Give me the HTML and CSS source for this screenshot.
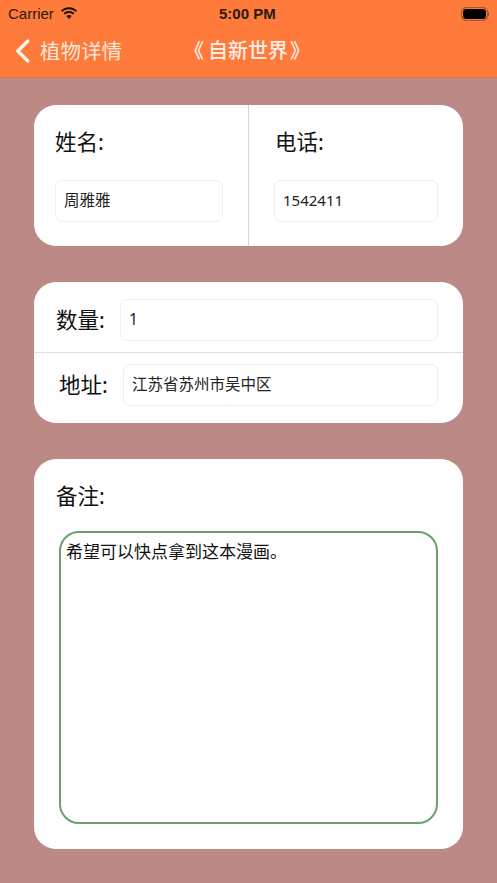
FILE: index.html
```html
<!DOCTYPE html>
<html lang="zh">
<head>
<meta charset="utf-8">
<title>《自新世界》</title>
<link rel="stylesheet" href="styles.css">
</head>
<body>
<div class="phone">
  <header class="top">
    <div class="status">
      <div class="status-left">
        <span class="carrier">Carrier</span>
        <svg class="wifi" width="18" height="13" viewBox="0 0 18 13"><path d="M9 2.200c2.600 0 5 1 6.800 2.700l1.200-1.300C14.900 1.500 12.100.3 9 .3S3.100 1.500 1 3.600l1.200 1.300C4 3.200 6.400 2.200 9 2.200z" fill="#1a1208"/><path d="M9 6c1.600 0 3 .6 4.100 1.600l1.300-1.300C13 4.900 11.100 4.100 9 4.100S5 4.900 3.600 6.300l1.300 1.300C6 6.600 7.400 6 9 6z" fill="#1a1208"/><path d="M9 8c-1 0-1.900.4-2.600 1L9 12l2.600-3C10.900 8.400 10 8 9 8z" fill="#1a1208"/></svg>
      </div>
      <span class="time">5:00 PM</span>
      <div class="battery"><span class="battery-fill"></span><span class="battery-cap"></span></div>
    </div>
    <nav class="nav">
      <div class="back">
        <svg class="chev" width="15" height="24" viewBox="0 0 15 24"><path d="M12.800 2L2.800 12l10 10" fill="none" stroke="#fff" stroke-width="3.200" stroke-linecap="round" stroke-linejoin="round" opacity=".92"/></svg>
        <span class="back-text">植物详情</span>
      </div>
      <h1 class="title"><span class="open">《</span>自新世界<span class="close">》</span></h1>
    </nav>
  </header>
  <main class="content">
    <section class="card card-split">
      <div class="col col-left">
        <div class="label">姓名:</div>
        <div class="field field-name">周雅雅</div>
      </div>
      <div class="col col-right">
        <div class="label">电话:</div>
        <div class="field field-phone">1542411</div>
      </div>
    </section>
    <section class="card card-rows">
      <div class="row row-qty">
        <div class="label">数量:</div>
        <div class="field field-grow">1</div>
      </div>
      <div class="row row-addr">
        <div class="label">地址:</div>
        <div class="field field-grow">江苏省苏州市吴中区</div>
      </div>
    </section>
    <section class="card card-note">
      <div class="label">备注:</div>
      <div class="note">希望可以快点拿到这本漫画。</div>
    </section>
  </main>
</div>
</body>
</html>
```
FILE: styles.css
```css
* { box-sizing: border-box; }
html, body { margin: 0; padding: 0; }
body { font-family: "Noto Sans", "Noto Sans CJK SC", sans-serif; color: #111; }
.phone { width: 497px; height: 883px; background: #bd8987; overflow: hidden; display: flex; flex-direction: column; }
.top { height: 78px; background: #ff7b3b; border-bottom: 1px solid #d97a55; flex: none; }
.status { height: 27px; display: flex; align-items: center; justify-content: space-between; padding: 0 8px; position: relative; }
.status-left { display: flex; align-items: center; gap: 6px; }
.carrier { font-family: "Liberation Sans", sans-serif; font-size: 15px; color: #2a1a10; }
.wifi { display: block; margin-top: -1px; }
.time { font-family: "Liberation Sans", sans-serif; font-size: 15px; font-weight: 700; color: #2a1a10; position: absolute; left: 219px; top: 5px; }
.battery { display: flex; align-items: center; }
.battery-fill { width: 25px; height: 12px; border-radius: 4px; background: #000; box-shadow: 0 0 0 1px #a0562f; border: 1px solid #ff7b3b; }
.battery-cap { width: 1.500px; height: 4px; background: #a0562f; margin-left: 1px; }
.nav { height: 50px; display: flex; align-items: center; position: relative; padding-left: 15px; padding-bottom: 2px; }
.back { display: flex; align-items: center; gap: 10px; }
.chev { display: block; }
.back-text { font-size: 20.500px; color: #fbe6da; line-height: 24px; }
.title { position: absolute; left: 184px; top: 11px; margin: 0; font-size: 20px; font-weight: 500; color: #fdf0e8; line-height: 26px; white-space: nowrap; }
.open { margin-right: 4px; }
.close { margin-left: 2px; }
.content { display: flex; flex-direction: column; padding: 27px 34px 0; gap: 36px; }
.card { background: #fff; border-radius: 22px; width: 429px; }
.card-split { height: 141px; display: flex; }
.col { padding-top: 22px; }
.col-left { width: 215px; border-right: 1px solid #d4d4d4; padding-left: 21px; }
.col-right { flex: 1; padding-left: 25px; }
.label { font-size: 21.500px; line-height: 30px; color: #111; white-space: nowrap; }
.col-right .label { padding-left: 1px; }
.field { height: 42px; border: 1px solid #eeeeee; border-radius: 7px; background: #fff; font-size: 15.500px; line-height: 38px; padding-left: 8px; color: #222; }
.col .field { margin-top: 23px; }
.field-name { width: 168px; }
.field-phone { width: 164px; font-size: 15px; }
.card-rows { height: 141px; display: flex; flex-direction: column; }
.row { display: flex; align-items: flex-start; padding-right: 25px; }
.row .label { width: 64px; line-height: 42px; flex: none; }
.row-qty { height: 71px; border-bottom: 1px solid #dedede; padding: 17px 25px 0 22px; }
.row-addr { flex: 1; padding: 11px 25px 0 25px; }
.field-grow { flex: 1; }
.card-note { height: 390px; padding: 22px 25px 25px 22px; display: flex; flex-direction: column; }
.note { margin: 20px 0 0 3px; height: 293px; border: 2px solid #6ba06a; border-radius: 20px; font-size: 17px; line-height: 24px; padding: 7px 5px; color: #111; }
```
